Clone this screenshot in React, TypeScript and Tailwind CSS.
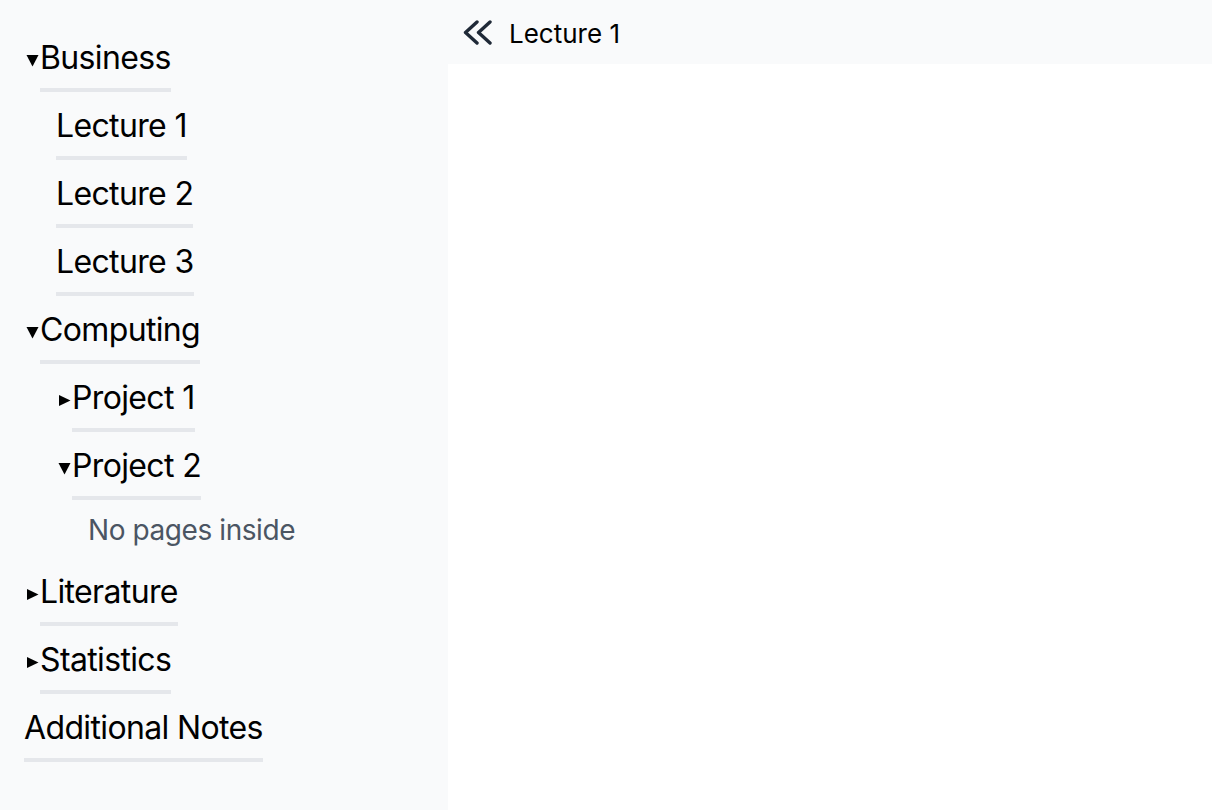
import React from "react";

const font = { fontFamily: "Inter, 'Noto Sans', sans-serif" };

function Down() {
  return (
    <svg width="16" height="48" viewBox="0 0 16 48" className="shrink-0">
      <polygon points="2.5,23 14.5,23 8.5,34.5" fill="#000" />
    </svg>
  );
}

function Right() {
  return (
    <svg width="16" height="48" viewBox="0 0 16 48" className="shrink-0">
      <polygon points="3,23 14.5,28.5 3,34" fill="#000" />
    </svg>
  );
}

function Item({ label, marker }: { label: string; marker?: "open" | "closed" }) {
  return (
    <div className="flex items-start mb-2">
      {marker === "open" && <Down />}
      {marker === "closed" && <Right />}
      <span className="inline-block pt-[2px] pb-[6px] border-b-4 border-[#e5e7eb] text-[32px] leading-[48px] text-black tracking-[-0.02em]">
        {label}
      </span>
    </div>
  );
}

export default function App() {
  return (
    <div className="flex w-[1212px] h-[810px] bg-white" style={font}>
      <aside className="w-[448px] shrink-0 h-full bg-[#f9fafb] pt-8 pl-6">
        <Item label="Business" marker="open" />
        <div className="pl-8">
          <Item label="Lecture 1" />
          <Item label="Lecture 2" />
          <Item label="Lecture 3" />
        </div>
        <Item label="Computing" marker="open" />
        <div className="pl-8">
          <Item label="Project 1" marker="closed" />
          <Item label="Project 2" marker="open" />
          <div className="pl-8 pt-[2px] pb-[16px] text-[28px] leading-[40px] text-[#4b5563] tracking-[-0.015em]">
            No pages inside
          </div>
        </div>
        <Item label="Literature" marker="closed" />
        <Item label="Statistics" marker="closed" />
        <Item label="Additional Notes" />
      </aside>
      <main className="flex-1 flex flex-col">
        <header className="h-16 bg-[#f9fafb] flex items-center pl-[15px]">
          <svg width="30" height="26" viewBox="0 0 30 26" className="mt-[1px]">
            <polyline points="14,2 2.5,12.5 14,23" fill="none" stroke="#1f2937" strokeWidth="3.4" strokeLinecap="round" strokeLinejoin="round" />
            <polyline points="27,2 15.5,12.5 27,23" fill="none" stroke="#1f2937" strokeWidth="3.4" strokeLinecap="round" strokeLinejoin="round" />
          </svg>
          <span className="ml-4 text-[26px] leading-[32px] text-black pt-1">Lecture 1</span>
        </header>
        <div className="flex-1 bg-white" />
      </main>
    </div>
  );
}
